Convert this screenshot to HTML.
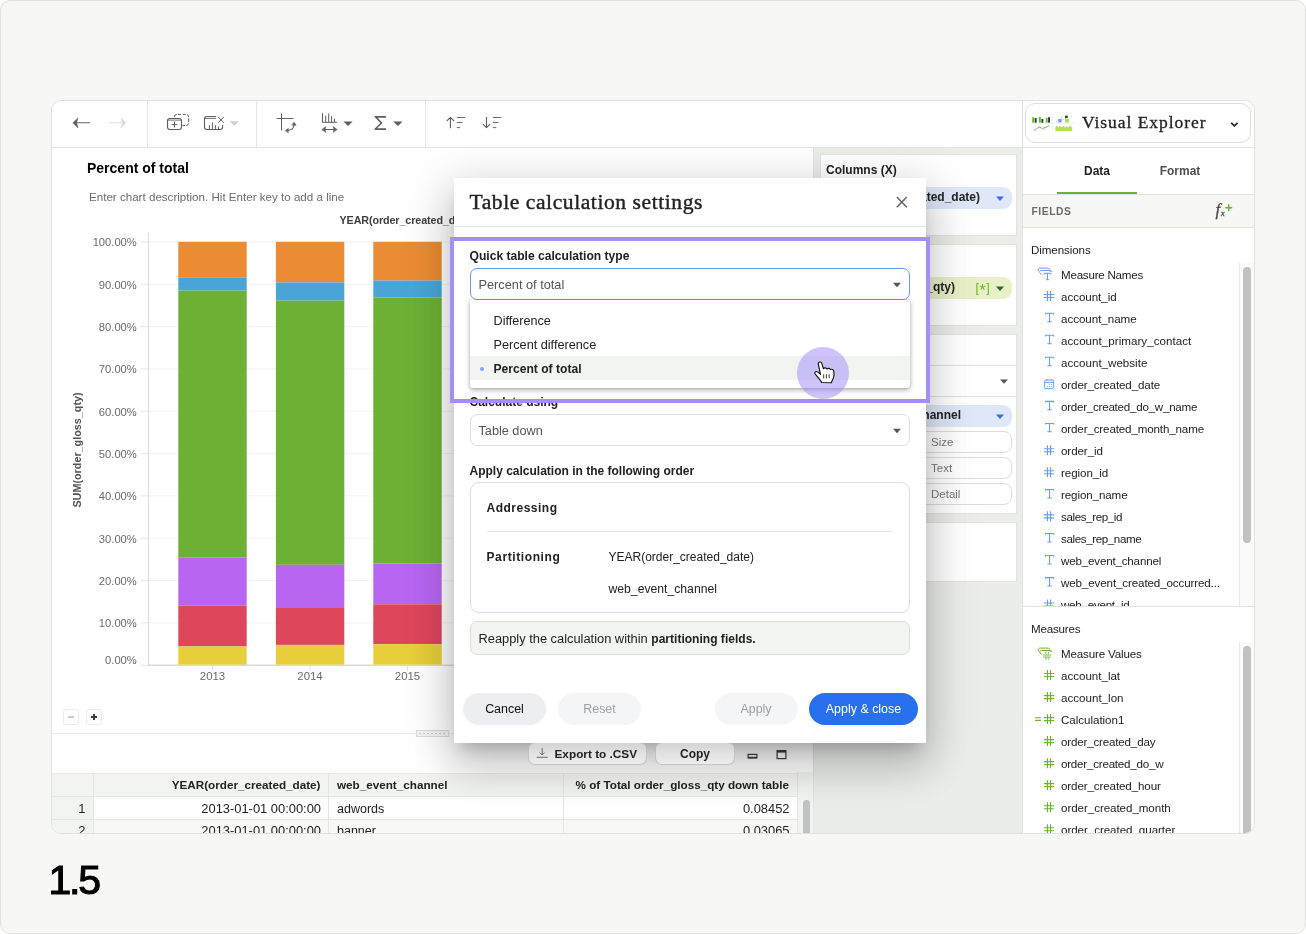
<!DOCTYPE html>
<html lang="en">
<head>
<meta charset="utf-8">
<title>Table calculation settings</title>
<style>
*{box-sizing:border-box;margin:0;padding:0}
html,body{width:1306px;height:934px;overflow:hidden;background:#fff}
body{position:relative;font-family:"Liberation Sans",sans-serif;color:#222;font-size:12px}
.a{position:absolute;white-space:nowrap}
body{will-change:transform}
.frame{left:0;top:0;width:1306px;height:934px;border:1px solid #dfe2de;border-radius:10px;background:#f7f7f5}
.app{left:51px;top:100px;width:1204px;height:734px;border:1px solid #dfe2de;border-radius:10px;background:#fff;overflow:hidden}
.pg{left:-52px;top:-101px;width:1306px;height:934px}
.serif{font-family:"Liberation Serif",serif}
.b{font-weight:700}
.t{line-height:16px;height:16px}
/*SECTION-CSS*/
</style>
</head>
<body>
<div class="a frame"></div>
<div class="a app"><div class="a pg">
<!--TOOLBAR-->
<div class="a" style="left:52px;top:147px;width:1202px;height:1px;background:#e3e5e1"></div>
<div class="a" style="left:147px;top:101px;width:1px;height:46px;background:#e6e8e4"></div>
<div class="a" style="left:256px;top:101px;width:1px;height:46px;background:#e6e8e4"></div>
<div class="a" style="left:425px;top:101px;width:1px;height:46px;background:#e6e8e4"></div>
<svg class="a" style="left:52px;top:101px" width="480" height="46" viewBox="52 101 480 46" fill="none" stroke="#5e5e5c" stroke-width="1" stroke-linecap="round" stroke-linejoin="round">
  <path d="M76 122.7H89.6" stroke-width="1.1" stroke="#666664"/>
  <path d="M73 122.7L77.9 117.900L76.500 122.7L77.9 127.5Z" fill="#5e5e5c" stroke-width=".6"/>
  <path d="M109.2 122.7H123" stroke="#dededc" stroke-width="1.1"/>
  <path d="M125.800 122.7L121.100 117.900L122.500 122.7L121.100 127.5Z" fill="#dcdcda" stroke="#dcdcda" stroke-width=".6"/>
  <!-- duplicate -->
  <rect x="167.5" y="118.5" width="14" height="11" rx="2.4" stroke-width="1.1"/>
  <path d="M168 120.1H181" stroke-width=".9"/>
  <path d="M174.500 122.100V127.100M172 124.600H177" stroke-width="1"/>
  <path d="M174.300 117.200V116.900a2.500 2.500 0 0 1 2.500-2.500h0.300M177.900 114.400H181M182.800 114.400H185.800M187 114.600a2.500 2.500 0 0 1 1.700 2.300v.3M188.700 118.300V122.100M188.700 123.300a2.500 2.500 0 0 1-2.300 2.100M185 125.400H182.300" stroke-width="1" stroke-linecap="butt"/>
  <!-- chart x -->
  <path d="M215.600 116.500H207a2.500 2.500 0 0 0-2.500 2.500v8a2.500 2.500 0 0 0 2.500 2.500h13.100a2.500 2.500 0 0 0 2.500-2.500V125.200" stroke-width="1.1"/>
  <path d="M205 118.400H215.600" stroke-width=".9"/>
  <path d="M209.400 129V125.200M212.400 129V122.300M215.400 129V125.200M218.400 129V126.400" stroke-width="1" stroke-linecap="butt"/>
  <path d="M218.400 117.300L223.600 122.500M223.600 117.300L218.400 122.500" stroke-width="1"/>
  <path d="M229.600 121.300h9.200l-4.600 4.500z" fill="#cdcfcb" stroke="none"/>
  <!-- swap axes -->
  <path d="M281.500 114V130M277 118.400H293" stroke-width="1.050"/>
  <path d="M287.500 130.500C291.500 130.200 293.900 128.600 294.100 124.800" stroke-width="1.050"/>
  <path d="M285.400 130.500L288.300 128.400V132.500ZM294.100 122.300L296.200 125.200H292Z" fill="#5e5e5c" stroke-width=".5"/>
  <!-- bars + arrow -->
  <path d="M322.500 113.200V122.300H337M325.700 122.300V115.600M328.700 122.300V113.500M331.600 122.300V116.100M334.500 122.300V118.800" stroke-width="1" stroke-linecap="butt"/>
  <path d="M324.500 129.400H334.500" stroke-width="1.050"/>
  <path d="M321.900 129.400L325.900 126.600L325.100 129.400L325.900 132.300ZM337.100 129.400L333.100 126.600L333.900 129.400L333.100 132.300Z" fill="#5e5e5c" stroke-width=".5"/>
  <path d="M343.400 121.400h9.300l-4.650 4.600z" fill="#5e5e5c" stroke="none"/>
  <!-- sigma -->
  <path d="M374.600 116h11.300v1.700h-8.300l5 5.300l-5.500 5.300h8.900v1.700h-11.500v-1.200l5.900-5.800l-5.800-5.900z" fill="#5e5e5c" stroke="none"/>
  <path d="M393.300 121.400h9.300l-4.650 4.600z" fill="#5e5e5c" stroke="none"/>
  <!-- sort asc -->
  <path d="M450.400 127.800V117.600M447.100 120.600L450.400 117.300L453.700 120.600" stroke-width="1.1"/>
  <path d="M457.200 117.500H464.800M457.200 122.500H462M457.200 127.600H459.800" stroke-width="1" stroke="#6a6a68"/>
  <!-- sort desc -->
  <path d="M486.500 117.200V127.500M483.200 124.400L486.500 127.700L489.800 124.400" stroke-width="1.1"/>
  <path d="M493.300 117.500H500.900M493.300 122.500H498.100M493.300 127.600H495.900" stroke-width="1" stroke="#6a6a68"/>
</svg>
<!--/TOOLBAR-->
<!--CHART-->
<div class="a b" style="left:87px;top:159px;font-size:14px;line-height:18px;color:#000">Percent of total</div>
<div class="a" style="left:89px;top:190px;font-size:11.6px;line-height:14px;color:#6b6b69">Enter chart description. Hit Enter key to add a line</div>
<div class="a b" style="left:339.5px;top:213px;font-size:10.75px;line-height:14px;color:#3f3f3d;letter-spacing:-.1px">YEAR(order_created_date)</div>
<div class="a b" style="left:-23px;top:443px;width:200px;text-align:center;font-size:10.8px;line-height:14px;color:#555553;transform:rotate(-90deg)">SUM(order_gloss_qty)</div>
<svg class="a" style="left:52px;top:225px" width="761" height="470" viewBox="52 225 761 470"><rect x="140.5" y="664.70" width="8" height="1" fill="#e6e6e4"/><rect x="148" y="622.38" width="665" height="1" fill="#f2f2f0"/><rect x="140.5" y="622.38" width="8" height="1" fill="#e6e6e4"/><rect x="148" y="580.06" width="665" height="1" fill="#f2f2f0"/><rect x="140.5" y="580.06" width="8" height="1" fill="#e6e6e4"/><rect x="148" y="537.74" width="665" height="1" fill="#f2f2f0"/><rect x="140.5" y="537.74" width="8" height="1" fill="#e6e6e4"/><rect x="148" y="495.42" width="665" height="1" fill="#f2f2f0"/><rect x="140.5" y="495.42" width="8" height="1" fill="#e6e6e4"/><rect x="148" y="453.10" width="665" height="1" fill="#f2f2f0"/><rect x="140.5" y="453.10" width="8" height="1" fill="#e6e6e4"/><rect x="148" y="410.78" width="665" height="1" fill="#f2f2f0"/><rect x="140.5" y="410.78" width="8" height="1" fill="#e6e6e4"/><rect x="148" y="368.46" width="665" height="1" fill="#f2f2f0"/><rect x="140.5" y="368.46" width="8" height="1" fill="#e6e6e4"/><rect x="148" y="326.14" width="665" height="1" fill="#f2f2f0"/><rect x="140.5" y="326.14" width="8" height="1" fill="#e6e6e4"/><rect x="148" y="283.82" width="665" height="1" fill="#f2f2f0"/><rect x="140.5" y="283.82" width="8" height="1" fill="#e6e6e4"/><rect x="148" y="241.50" width="665" height="1" fill="#f2f2f0"/><rect x="140.5" y="241.50" width="8" height="1" fill="#e6e6e4"/><rect x="148" y="233" width="1" height="433" fill="#dcdcda"/><rect x="148" y="664.60" width="665" height="1.2" fill="#d0d0ce"/><rect x="178.3" y="241.8" width="68.4" height="35.6" fill="#eb8c34"/><rect x="178.3" y="277.4" width="68.4" height="13.2" fill="#49a5d8"/><rect x="178.3" y="290.6" width="68.4" height="266.7" fill="#6db134"/><rect x="178.3" y="557.3" width="68.4" height="48.2" fill="#b866f2"/><rect x="178.3" y="605.5" width="68.4" height="40.9" fill="#de465c"/><rect x="178.3" y="646.4" width="68.4" height="18.2" fill="#e8ce3a"/><rect x="275.9" y="241.8" width="68.4" height="40.6" fill="#eb8c34"/><rect x="275.9" y="282.4" width="68.4" height="18.2" fill="#49a5d8"/><rect x="275.9" y="300.6" width="68.4" height="264.2" fill="#6db134"/><rect x="275.9" y="564.8" width="68.4" height="42.4" fill="#b866f2"/><rect x="275.9" y="607.2" width="68.4" height="37.7" fill="#de465c"/><rect x="275.9" y="644.9" width="68.4" height="19.7" fill="#e8ce3a"/><rect x="373.3" y="241.8" width="68.4" height="38.7" fill="#eb8c34"/><rect x="373.3" y="280.5" width="68.4" height="16.9" fill="#49a5d8"/><rect x="373.3" y="297.4" width="68.4" height="266.2" fill="#6db134"/><rect x="373.3" y="563.6" width="68.4" height="40.7" fill="#b866f2"/><rect x="373.3" y="604.3" width="68.4" height="39.9" fill="#de465c"/><rect x="373.3" y="644.2" width="68.4" height="20.4" fill="#e8ce3a"/><rect x="470.8" y="241.8" width="68.4" height="39.2" fill="#eb8c34"/><rect x="470.8" y="281" width="68.4" height="17.0" fill="#49a5d8"/><rect x="470.8" y="298" width="68.4" height="265.0" fill="#6db134"/><rect x="470.8" y="563" width="68.4" height="41.0" fill="#b866f2"/><rect x="470.8" y="604" width="68.4" height="40.0" fill="#de465c"/><rect x="470.8" y="644" width="68.4" height="20.6" fill="#e8ce3a"/><rect x="212.0" y="666" width="1" height="5" fill="#e6e6e4"/><rect x="309.5" y="666" width="1" height="5" fill="#e6e6e4"/><rect x="407.0" y="666" width="1" height="5" fill="#e6e6e4"/></svg>
<div class="a" style="left:60px;width:76.8px;text-align:right;top:652.8px;font-size:11.2px;line-height:14px;color:#6b6b69">0.00%</div>
<div class="a" style="left:60px;width:76.8px;text-align:right;top:616.2px;font-size:11.2px;line-height:14px;color:#6b6b69">10.00%</div>
<div class="a" style="left:60px;width:76.8px;text-align:right;top:573.9px;font-size:11.2px;line-height:14px;color:#6b6b69">20.00%</div>
<div class="a" style="left:60px;width:76.8px;text-align:right;top:531.5px;font-size:11.2px;line-height:14px;color:#6b6b69">30.00%</div>
<div class="a" style="left:60px;width:76.8px;text-align:right;top:489.2px;font-size:11.2px;line-height:14px;color:#6b6b69">40.00%</div>
<div class="a" style="left:60px;width:76.8px;text-align:right;top:446.9px;font-size:11.2px;line-height:14px;color:#6b6b69">50.00%</div>
<div class="a" style="left:60px;width:76.8px;text-align:right;top:404.6px;font-size:11.2px;line-height:14px;color:#6b6b69">60.00%</div>
<div class="a" style="left:60px;width:76.8px;text-align:right;top:362.3px;font-size:11.2px;line-height:14px;color:#6b6b69">70.00%</div>
<div class="a" style="left:60px;width:76.8px;text-align:right;top:319.9px;font-size:11.2px;line-height:14px;color:#6b6b69">80.00%</div>
<div class="a" style="left:60px;width:76.8px;text-align:right;top:277.6px;font-size:11.2px;line-height:14px;color:#6b6b69">90.00%</div>
<div class="a" style="left:60px;width:76.8px;text-align:right;top:235.3px;font-size:11.2px;line-height:14px;color:#6b6b69">100.00%</div>
<div class="a" style="left:182.5px;width:60px;text-align:center;top:669px;font-size:11.4px;line-height:14px;color:#6b6b69">2013</div>
<div class="a" style="left:280px;width:60px;text-align:center;top:669px;font-size:11.4px;line-height:14px;color:#6b6b69">2014</div>
<div class="a" style="left:377.5px;width:60px;text-align:center;top:669px;font-size:11.4px;line-height:14px;color:#6b6b69">2015</div>
<div class="a" style="left:63px;top:709px;width:16px;height:16px;border:1px solid #e9ebe6;border-radius:3px;background:#fff"></div>
<div class="a" style="left:86px;top:709px;width:16px;height:16px;border:1px solid #e9ebe6;border-radius:3px;background:#fff"></div>
<svg class="a" style="left:63px;top:709px" width="40" height="16" viewBox="63 709 40 16" shape-rendering="crispEdges"><rect x="68" y="716" width="6" height="2" fill="#cbcbc9"/><rect x="91" y="716" width="6" height="2" fill="#3a3a38"/><rect x="93" y="714" width="2" height="6" fill="#3a3a38"/></svg>
<div class="a" style="left:52px;top:733px;width:761px;height:1px;background:#ededeb"></div>
<div class="a" style="left:416px;top:730px;width:33px;height:7px;border:1px solid #d9dcd7;background:#f4f5f3"><div class="a" style="left:2px;top:2px;width:27px;height:1px;background:repeating-linear-gradient(90deg,#c9ccc7 0 2px,transparent 2px 4px)"></div></div>
<!--/CHART-->
<!--TABLE-->
<svg class="a" style="left:746px;top:748px" width="44" height="14" viewBox="746 748 44 14" fill="none" stroke="#3c3c3a" stroke-width="1.2"><rect x="748.1" y="754.4" width="8.8" height="3.4"/><path d="M748 757.6H757" stroke-width="1.6"/><rect x="777.1" y="750.6" width="8.8" height="8"/><path d="M777 751.6H786" stroke-width="2"/></svg>
<div class="a" style="left:52px;top:772px;width:761px;height:62px;background:#fff"></div>
<div class="a" style="left:94px;top:820px;width:703px;height:14px;background:#f8f9f7"></div><div class="a" style="left:52px;top:773px;width:761px;height:24px;background:#f2f4f1;border-top:1px solid #eaece8;border-bottom:1px solid #e6e8e4"></div>
<div class="a" style="left:52px;top:797px;width:42px;height:37px;background:#f2f4f1"></div>
<div class="a" style="left:797px;top:772px;width:16px;height:62px;background:#f2f4f1;border-left:1px solid #e4e6e2"></div>
<div class="a" style="left:93px;top:773px;width:1px;height:61px;background:#e4e6e2"></div>
<div class="a" style="left:328px;top:773px;width:1px;height:61px;background:#e4e6e2"></div>
<div class="a" style="left:563px;top:773px;width:1px;height:61px;background:#e4e6e2"></div>
<div class="a" style="left:52px;top:819px;width:745px;height:1px;background:#e4e6e2"></div>
<div class="a" style="left:803px;top:800px;width:7px;height:40px;border-radius:4px;background:#c1c1c1"></div>
<div class="a b" style="left:94px;width:226.5px;text-align:right;font-size:11.7px;line-height:16px;color:#222;top:777px">YEAR(order_created_date)</div>
<div class="a b" style="left:337px;font-size:11.7px;line-height:16px;color:#222;top:777px">web_event_channel</div>
<div class="a b" style="left:564px;width:225px;text-align:right;font-size:11.7px;line-height:16px;color:#222;top:777px">% of Total order_gloss_qty down table</div>
<div class="a" style="left:52px;width:33.5px;text-align:right;top:800.5px;font-size:12.9px;line-height:16px;color:#222">1</div>
<div class="a" style="left:94px;width:227px;text-align:right;top:800.5px;font-size:12.9px;line-height:16px;color:#222">2013-01-01 00:00:00</div>
<div class="a" style="left:337px;top:800.5px;font-size:12.5px;line-height:16px;color:#222">adwords</div>
<div class="a" style="left:564px;width:225.5px;text-align:right;top:800.5px;font-size:12.9px;line-height:16px;color:#222">0.08452</div>
<div class="a" style="left:52px;width:33.5px;text-align:right;top:823.0px;font-size:12.9px;line-height:16px;color:#222">2</div>
<div class="a" style="left:94px;width:227px;text-align:right;top:823.0px;font-size:12.9px;line-height:16px;color:#222">2013-01-01 00:00:00</div>
<div class="a" style="left:337px;top:823.0px;font-size:12.5px;line-height:16px;color:#222">banner</div>
<div class="a" style="left:564px;width:225.5px;text-align:right;top:823.0px;font-size:12.9px;line-height:16px;color:#222">0.03065</div>
<!--/TABLE-->
<!--SHELF-->
<div class="a" style="left:813px;top:148px;width:210px;height:686px;background:#ebede9;border-left:1px solid #e1e3df"></div>
<div class="a" style="left:820px;top:154px;width:197px;height:82px;background:#fff;border:1px solid #e1e3df"></div>
<div class="a" style="left:820px;top:244px;width:197px;height:82px;background:#fff;border:1px solid #e1e3df"></div>
<div class="a" style="left:820px;top:334px;width:197px;height:180px;background:#fff;border:1px solid #e1e3df"></div>
<div class="a" style="left:820px;top:522px;width:197px;height:60px;background:#fff;border:1px solid #e1e3df"></div>
<div class="a b" style="left:826px;top:161.5px;font-size:12px;line-height:16px;color:#222">Columns (X)</div>
<div class="a b" style="left:826px;top:251.5px;font-size:12px;line-height:16px;color:#222">Rows (Y)</div>
<div class="a b" style="left:826px;top:341.5px;font-size:12px;line-height:16px;color:#222">Marks</div>
<div class="a" style="left:825px;top:187px;width:187px;height:22px;border-radius:9px;font-size:12px;line-height:21px;font-weight:700;color:#222;text-align:right;background:#dfe8f8;padding-right:32px">YEAR(order_created_date)</div>
<div class="a" style="left:825px;top:277px;width:187px;height:22px;border-radius:9px;font-size:12px;line-height:21px;font-weight:700;color:#222;text-align:right;background:#e7f0c6;padding-right:57px">SUM(order_gloss_qty)</div>
<div class="a" style="left:975.5px;top:279.5px;font-size:12.5px;line-height:16px;color:#6db32c">[<span style="font-size:17px;line-height:0;position:relative;top:4.2px;margin:0 .3px">*</span>]</div>
<div class="a" style="left:825px;top:405px;width:187px;height:22px;border-radius:9px;font-size:12px;line-height:21px;font-weight:700;color:#222;text-align:right;background:#dfe8f8;padding-right:51px">web_event_channel</div>
<svg class="a" style="left:990px;top:190px" width="20" height="240" viewBox="990 190 20 240"><path d="M996 196.6h8l-4 4.4z" fill="#3a6fd9"/><path d="M996 286.6h8l-4 4.4z" fill="#2a6a1c"/><path d="M1000 379.4h8l-4 4.4z" fill="#555"/><path d="M996 414.6h8l-4 4.4z" fill="#3a6fd9"/></svg>
<div class="a" style="left:821px;top:365px;width:195px;height:1px;background:#dfe1dd"></div>
<div class="a" style="left:821px;top:396px;width:195px;height:1px;background:#dfe1dd"></div>
<div class="a" style="left:830px;top:373.5px;font-size:12px;line-height:16px;color:#555">Bar</div>
<div class="a" style="top:431px;left:825px;width:187px;height:22px;border:1px solid #dcdeda;border-radius:8px;background:#fff;font-size:11.5px;line-height:20px;color:#777;padding-left:105px">Size</div>
<div class="a" style="top:457px;left:825px;width:187px;height:22px;border:1px solid #dcdeda;border-radius:8px;background:#fff;font-size:11.5px;line-height:20px;color:#777;padding-left:105px">Text</div>
<div class="a" style="top:483px;left:825px;width:187px;height:22px;border:1px solid #dcdeda;border-radius:8px;background:#fff;font-size:11.5px;line-height:20px;color:#777;padding-left:105px">Detail</div>
<!--/SHELF-->
<!--PANEL-->
<div class="a" style="left:1022px;top:101px;width:232px;height:733px;background:#fff;border-left:1px solid #e1e3df"></div>
<div class="a" style="left:1022px;top:147px;width:232px;height:1px;background:#e3e5e1"></div>
<div class="a" style="left:1025px;top:103px;width:226px;height:40px;border:1px solid #dcdeda;border-radius:10px;background:#fff"></div>
<svg class="a" style="left:1029px;top:114px" width="48" height="19" viewBox="1029 114 48 19">
<path d="M1030 123.6H1075M1052.6 115.2V131.4" stroke="#ecedea" stroke-width="0.8" fill="none"/>
<g fill="#6db32c"><rect x="1032.2" y="117.3" width="1.9" height="5.4"/><rect x="1038.9" y="116.9" width="1.9" height="5.8"/><rect x="1045.8" y="117.7" width="1.8" height="5"/></g>
<g fill="#0f4a30"><rect x="1034.7" y="118" width="1.9" height="4.7"/><rect x="1041.4" y="119" width="1.9" height="3.7"/><rect x="1048.1" y="117.2" width="1.9" height="5.5"/></g>
<path d="M1033.6 130.6L1039.3 127L1042.6 128.6L1049.6 125.6" stroke="#6db32c" stroke-width="0.9" fill="none"/>
<path d="M1034.6 130.8L1039.4 125.4L1044 130.4L1049.8 125.2" stroke="#c5d6fb" stroke-width="0.6" fill="none"/>
<rect x="1058.2" y="119" width="3.4" height="3.4" fill="#6a9bf4"/><rect x="1065" y="115.6" width="2.8" height="2.6" fill="#17602c"/><rect x="1065" y="119" width="4" height="3.6" fill="#b5e05a"/>
<g fill="#a9c3fa"><rect x="1056" y="121" width="1" height="1"/><rect x="1061" y="117" width="1" height="1"/><rect x="1062.8" y="118.8" width="1" height="1"/><rect x="1070.8" y="115.8" width="1" height="1"/></g>
<path d="M1055.3 131V127.5L1057 125.6L1058.4 127.4L1060 125.8L1061.6 127.6L1063.4 125.8L1065 127.8L1066.8 126L1068.2 127.6L1070 125.6L1072.2 127.4V131Z" fill="#b5e05a"/>
</svg>
<div class="a serif" style="left:1082px;top:110px;font-size:17.5px;line-height:24px;letter-spacing:.95px;color:#222;-webkit-text-stroke:.3px #222">Visual Explorer</div>
<svg class="a" style="left:1229px;top:120px" width="11" height="9" viewBox="0 0 11 9"><path d="M2.2 2.8L5.4 5.8L8.6 2.8" stroke="#222" stroke-width="1.7" fill="none"/></svg>
<div class="a b" style="left:1057px;top:162.5px;width:80px;text-align:center;font-size:12px;line-height:16px;color:#222">Data</div>
<div class="a b" style="left:1140px;top:162.5px;width:80px;text-align:center;font-size:12px;line-height:16px;color:#4f4f4d">Format</div>
<div class="a" style="left:1057px;top:191.5px;width:80px;height:2.5px;background:#6db32c"></div>
<div class="a" style="left:1023px;top:194px;width:231px;height:34px;background:#f7f7f5;border-top:1px solid #e1e3df;border-bottom:1px solid #e1e3df"></div>
<div class="a b" style="left:1031.5px;top:204px;font-size:10.3px;line-height:16px;letter-spacing:.55px;color:#6b6b69">FIELDS</div>
<div class="a serif" style="left:1215.5px;top:200px;font-size:17px;line-height:20px;font-style:italic;color:#4a4a48;-webkit-text-stroke:.3px #4a4a48">f</div>
<div class="a serif" style="left:1221px;top:208.5px;font-size:8px;line-height:10px;font-style:italic;color:#4a4a48;-webkit-text-stroke:.3px #4a4a48">x</div>
<svg class="a" style="left:1224px;top:203px" width="10" height="10" viewBox="0 0 10 10"><path d="M4.7 1.2V8.2M1.2 4.7H8.2" stroke="#6db32c" stroke-width="1.5" fill="none"/></svg>
<div class="a" style="left:1031px;top:242px;font-size:11.6px;line-height:16px;color:#222;letter-spacing:-.09px">Dimensions</div>
<div class="a" style="left:1031px;top:621px;font-size:11.6px;line-height:16px;color:#222;letter-spacing:-.2px">Measures</div>
<div class="a" style="left:1023px;top:606px;width:231px;height:1px;background:#e1e3df"></div>
<div class="a" style="left:0;top:262px;width:1239px;height:344px;overflow:hidden"><svg class="a" style="left:1030px;top:0px" width="30" height="344" viewBox="1030 262 30 344"><path d="M1038.3 271.2C1038 269.1 1038.7 268.1 1040.1 268.1H1048.6L1051.7 271.7" stroke="#6a9bf4" stroke-width="1" fill="none"/><path d="M1041.6 274.7L1039.7 272.4C1039.4 271.2 1040.1 270.5 1041.6 270.5H1048.9L1051.5 271.7" stroke="#6a9bf4" stroke-width="1" fill="none"/><path d="M1044.2 274.7V273.3H1050.8V274.7M1047.5 273.3V279.7M1046 279.7H1048.9" stroke="#6a9bf4" stroke-width="1" fill="none"/><path d="M1047.45 291.03V301.03M1050.55 291.03V301.03M1043.9 294.53H1054.1M1043.9 297.53H1054.1" stroke="#6a9bf4" stroke-width="1.15" fill="none"/><path d="M1045.5 314.46V313.26H1053.6V314.46M1049.55 313.26V321.66M1047.4 321.66H1051.7" stroke="#6a9bf4" stroke-width="1.05" fill="none"/><path d="M1045.5 336.49V335.29H1053.6V336.49M1049.55 335.29V343.69M1047.4 343.69H1051.7" stroke="#6a9bf4" stroke-width="1.05" fill="none"/><path d="M1045.5 358.52V357.32H1053.6V358.52M1049.55 357.32V365.72M1047.4 365.72H1051.7" stroke="#6a9bf4" stroke-width="1.05" fill="none"/><rect x="1044.6" y="380.05" width="9" height="8.6" rx="1.3" stroke="#6a9bf4" stroke-width="1" fill="none"/><path d="M1044.6 382.35H1053.6M1046.9 379.05V380.25M1051.3 379.05V380.25" stroke="#6a9bf4" stroke-width="1" fill="none"/><path d="M1049 384.45h.9M1051 384.45h.9M1047 386.45h.9M1049 386.45h.9M1051 386.45h.9" stroke="#6a9bf4" stroke-width="0.9" fill="none"/><path d="M1045.5 402.58V401.38H1053.6V402.58M1049.55 401.38V409.78M1047.4 409.78H1051.7" stroke="#6a9bf4" stroke-width="1.05" fill="none"/><path d="M1045.5 424.61V423.41H1053.6V424.61M1049.55 423.41V431.81M1047.4 431.81H1051.7" stroke="#6a9bf4" stroke-width="1.05" fill="none"/><path d="M1047.45 445.24V455.24M1050.55 445.24V455.24M1043.9 448.74H1054.1M1043.9 451.74H1054.1" stroke="#6a9bf4" stroke-width="1.15" fill="none"/><path d="M1047.45 467.27V477.27M1050.55 467.27V477.27M1043.9 470.77H1054.1M1043.9 473.77H1054.1" stroke="#6a9bf4" stroke-width="1.15" fill="none"/><path d="M1045.5 490.7V489.5H1053.6V490.7M1049.55 489.5V497.9M1047.4 497.9H1051.7" stroke="#6a9bf4" stroke-width="1.05" fill="none"/><path d="M1047.45 511.33V521.33M1050.55 511.33V521.33M1043.9 514.83H1054.1M1043.9 517.83H1054.1" stroke="#6a9bf4" stroke-width="1.15" fill="none"/><path d="M1045.5 534.76V533.56H1053.6V534.76M1049.55 533.56V541.96M1047.4 541.96H1051.7" stroke="#6a9bf4" stroke-width="1.05" fill="none"/><path d="M1045.5 556.79V555.59H1053.6V556.79M1049.55 555.59V563.99M1047.4 563.99H1051.7" stroke="#6a9bf4" stroke-width="1.05" fill="none"/><path d="M1045.5 578.82V577.62H1053.6V578.82M1049.55 577.62V586.02M1047.4 586.02H1051.7" stroke="#6a9bf4" stroke-width="1.05" fill="none"/><path d="M1047.45 599.45V609.45M1050.55 599.45V609.45M1043.9 602.95H1054.1M1043.9 605.95H1054.1" stroke="#6a9bf4" stroke-width="1.15" fill="none"/></svg><div class="a" style="left:1061px;top:4.5px;font-size:11.6px;line-height:16px;color:#222;letter-spacing:-0.234px">Measure Names</div><div class="a" style="left:1061px;top:26.5px;font-size:11.6px;line-height:16px;color:#222;letter-spacing:-0.047px">account_id</div><div class="a" style="left:1061px;top:48.6px;font-size:11.6px;line-height:16px;color:#222;letter-spacing:-0.039px">account_name</div><div class="a" style="left:1061px;top:70.6px;font-size:11.6px;line-height:16px;color:#222;letter-spacing:0.031px">account_primary_contact</div><div class="a" style="left:1061px;top:92.6px;font-size:11.6px;line-height:16px;color:#222;letter-spacing:0.000px">account_website</div><div class="a" style="left:1061px;top:114.6px;font-size:11.6px;line-height:16px;color:#222;letter-spacing:-0.117px">order_created_date</div><div class="a" style="left:1061px;top:136.7px;font-size:11.6px;line-height:16px;color:#222;letter-spacing:-0.245px">order_created_do_w_name</div><div class="a" style="left:1061px;top:158.7px;font-size:11.6px;line-height:16px;color:#222;letter-spacing:-0.137px">order_created_month_name</div><div class="a" style="left:1061px;top:180.7px;font-size:11.6px;line-height:16px;color:#222;letter-spacing:-0.088px">order_id</div><div class="a" style="left:1061px;top:202.8px;font-size:11.6px;line-height:16px;color:#222;letter-spacing:-0.078px">region_id</div><div class="a" style="left:1061px;top:224.8px;font-size:11.6px;line-height:16px;color:#222;letter-spacing:-0.107px">region_name</div><div class="a" style="left:1061px;top:246.8px;font-size:11.6px;line-height:16px;color:#222;letter-spacing:-0.391px">sales_rep_id</div><div class="a" style="left:1061px;top:268.9px;font-size:11.6px;line-height:16px;color:#222;letter-spacing:-0.385px">sales_rep_name</div><div class="a" style="left:1061px;top:290.9px;font-size:11.6px;line-height:16px;color:#222;letter-spacing:-0.179px">web_event_channel</div><div class="a" style="left:1061px;top:312.9px;font-size:11.6px;line-height:16px;color:#222;letter-spacing:-0.121px">web_event_created_occurred...</div><div class="a" style="left:1061px;top:335.0px;font-size:11.6px;line-height:16px;color:#222;letter-spacing:-0.254px">web_event_id</div></div>
<div class="a" style="left:0;top:640px;width:1239px;height:194px;overflow:hidden"><svg class="a" style="left:1030px;top:0px" width="30" height="194" viewBox="1030 640 30 194"><path d="M1038.3 651.2C1038 649.1 1038.7 648.1 1040.1 648.1H1048.6L1051.7 651.7" stroke="#6db32c" stroke-width="1" fill="none"/><path d="M1041.6 654.7L1039.7 652.4C1039.4 651.2 1040.1 650.5 1041.6 650.5H1048.9L1051.5 651.7" stroke="#6db32c" stroke-width="1" fill="none"/><path d="M1045.8 652.1V660.1M1048.4 652.1V660.1M1043 655.1H1051M1043 657.3H1051" stroke="#6db32c" stroke-width="1.5" fill="none" opacity=".55"/><path d="M1047.45 670.03V680.03M1050.55 670.03V680.03M1043.9 673.53H1054.1M1043.9 676.53H1054.1" stroke="#6db32c" stroke-width="1.15" fill="none"/><path d="M1047.45 692.06V702.06M1050.55 692.06V702.06M1043.9 695.56H1054.1M1043.9 698.56H1054.1" stroke="#6db32c" stroke-width="1.15" fill="none"/><path d="M1047.45 714.09V724.09M1050.55 714.09V724.09M1043.9 717.59H1054.1M1043.9 720.59H1054.1" stroke="#6db32c" stroke-width="1.15" fill="none"/><path d="M1035 717.79H1041.1M1035 720.39H1041.1" stroke="#6db32c" stroke-width="1.1" fill="none"/><path d="M1047.45 736.12V746.12M1050.55 736.12V746.12M1043.9 739.62H1054.1M1043.9 742.62H1054.1" stroke="#6db32c" stroke-width="1.15" fill="none"/><path d="M1047.45 758.15V768.15M1050.55 758.15V768.15M1043.9 761.65H1054.1M1043.9 764.65H1054.1" stroke="#6db32c" stroke-width="1.15" fill="none"/><path d="M1047.45 780.18V790.18M1050.55 780.18V790.18M1043.9 783.68H1054.1M1043.9 786.68H1054.1" stroke="#6db32c" stroke-width="1.15" fill="none"/><path d="M1047.45 802.21V812.21M1050.55 802.21V812.21M1043.9 805.71H1054.1M1043.9 808.71H1054.1" stroke="#6db32c" stroke-width="1.15" fill="none"/><path d="M1047.45 824.24V834.24M1050.55 824.24V834.24M1043.9 827.74H1054.1M1043.9 830.74H1054.1" stroke="#6db32c" stroke-width="1.15" fill="none"/></svg><div class="a" style="left:1061px;top:5.5px;font-size:11.6px;line-height:16px;color:#222;letter-spacing:-0.167px">Measure Values</div><div class="a" style="left:1061px;top:27.5px;font-size:11.6px;line-height:16px;color:#222;letter-spacing:-0.021px">account_lat</div><div class="a" style="left:1061px;top:49.6px;font-size:11.6px;line-height:16px;color:#222;letter-spacing:0.000px">account_lon</div><div class="a" style="left:1061px;top:71.6px;font-size:11.6px;line-height:16px;color:#222;letter-spacing:-0.039px">Calculation1</div><div class="a" style="left:1061px;top:93.6px;font-size:11.6px;line-height:16px;color:#222;letter-spacing:-0.179px">order_created_day</div><div class="a" style="left:1061px;top:115.6px;font-size:11.6px;line-height:16px;color:#222;letter-spacing:-0.221px">order_created_do_w</div><div class="a" style="left:1061px;top:137.7px;font-size:11.6px;line-height:16px;color:#222;letter-spacing:-0.117px">order_created_hour</div><div class="a" style="left:1061px;top:159.7px;font-size:11.6px;line-height:16px;color:#222;letter-spacing:-0.062px">order_created_month</div><div class="a" style="left:1061px;top:181.7px;font-size:11.6px;line-height:16px;color:#222;letter-spacing:-0.056px">order_created_quarter</div></div>
<div class="a" style="left:1239px;top:263px;width:15px;height:343px;background:#fafafa;border-left:1px solid #e8e8e8"></div>
<div class="a" style="left:1243px;top:267px;width:8px;height:276px;border-radius:4px;background:#c1c1c1"></div>
<div class="a" style="left:1239px;top:642px;width:15px;height:192px;background:#fafafa;border-left:1px solid #e8e8e8"></div>
<div class="a" style="left:1243px;top:646px;width:8px;height:200px;border-radius:4px;background:#c1c1c1"></div>
<!--/PANEL-->
</div></div>
<!--MODAL-->
<div class="a" style="left:454px;top:178px;width:472px;height:565px;background:#fff;box-shadow:0 11px 15px -7px rgba(0,0,0,.2),0 24px 38px 3px rgba(0,0,0,.14),0 9px 46px 8px rgba(0,0,0,.12)"></div>
<div class="a serif" style="left:469.5px;top:186.5px;font-size:21.6px;line-height:30px;color:#222;letter-spacing:.55px;-webkit-text-stroke:.4px #222">Table calculation settings</div>
<svg class="a" style="left:895px;top:195px" width="14" height="14" viewBox="0 0 14 14"><path d="M1.800 2L11.800 12.200M11.800 2L1.800 12.200" stroke="#676765" stroke-width="1.55" fill="none"/></svg>
<div class="a" style="left:454px;top:226px;width:472px;height:1px;background:#e6e8e4"></div>
<div class="a" style="left:469.5px;top:247.5px;font-size:12.1px;line-height:16px;color:#222;font-weight:700">Quick table calculation type</div>
<div class="a" style="left:470px;top:268px;width:440px;height:32px;border:1px solid #6a9bf4;border-radius:7px;background:#fff"></div>
<div class="a" style="left:478.5px;top:276.5px;font-size:12.75px;line-height:16px;color:#555553">Percent of total</div>
<svg class="a" style="left:892px;top:282px" width="10" height="6" viewBox="0 0 10 6"><path d="M1 .8h8l-4 4.4z" fill="#555"/></svg>
<div class="a" style="left:469.5px;top:393.5px;font-size:12px;line-height:16px;color:#222;font-weight:700">Calculate using</div>
<div class="a" style="left:470px;top:414px;width:440px;height:32px;border:1px solid #dcdeda;border-radius:7px;background:#fff"></div>
<div class="a" style="left:478.5px;top:422.5px;font-size:12.7px;line-height:16px;color:#555553">Table down</div>
<svg class="a" style="left:892px;top:428px" width="10" height="6" viewBox="0 0 10 6"><path d="M1 .8h8l-4 4.4z" fill="#555"/></svg>
<div class="a" style="left:469.5px;top:462.5px;font-size:12px;line-height:16px;color:#222;font-weight:700">Apply calculation in the following order</div>
<div class="a" style="left:470px;top:482px;width:440px;height:131px;border:1px solid #dcdeda;border-radius:9px;background:#fff"></div>
<div class="a b" style="left:486.5px;top:499.5px;font-size:12px;line-height:16px;letter-spacing:.5px;color:#222">Addressing</div>
<div class="a" style="left:487px;top:531px;width:406px;height:1px;background:#e6e8e4"></div>
<div class="a b" style="left:486.5px;top:548.5px;font-size:12px;line-height:16px;letter-spacing:.6px;color:#222">Partitioning</div>
<div class="a" style="left:608.5px;top:548.5px;font-size:12px;line-height:16px;color:#222">YEAR(order_created_date)</div>
<div class="a" style="left:608.5px;top:580.5px;font-size:12.2px;line-height:16px;color:#222">web_event_channel</div>
<div class="a" style="left:470px;top:621px;width:440px;height:34px;border:1px solid #dcdeda;border-radius:7px;background:#f3f5f2"></div>
<div class="a" style="left:478.5px;top:630.5px;font-size:12.85px;line-height:16px;color:#222">Reapply the calculation within <b style="font-size:12.05px">partitioning fields.</b></div>
<div class="a" style="left:463px;width:83px;top:692.5px;height:32px;border-radius:16px;font-size:12.45px;line-height:33px;text-align:center;background:#eceef2;color:#111">Cancel</div>
<div class="a" style="left:558px;width:83px;top:692.5px;height:32px;border-radius:16px;font-size:12.45px;line-height:33px;text-align:center;background:#f4f5f7;color:#a0a0a4">Reset</div>
<div class="a" style="left:714.5px;width:83px;top:692.5px;height:32px;border-radius:16px;font-size:12.45px;line-height:33px;text-align:center;background:#f4f5f7;color:#a0a0a4">Apply</div>
<div class="a" style="left:809px;width:109px;top:692.5px;height:32px;border-radius:16px;font-size:12.45px;line-height:33px;text-align:center;background:#2970ee;color:#fff">Apply &amp; close</div>
<div class="a" style="left:470px;top:300px;width:440px;height:88px;background:#fff;border-radius:0 0 3px 3px;box-shadow:0 2px 5px rgba(0,0,0,.32),0 0 2px rgba(0,0,0,.12)"></div>
<div class="a" style="left:470px;top:356px;width:440px;height:24px;background:#f2f4f1"></div>
<div class="a" style="top:312.5px;left:493.5px;font-size:12.65px;line-height:16px;color:#222">Difference</div>
<div class="a" style="top:336.5px;left:493.5px;font-size:12.7px;line-height:16px;color:#222">Percent difference</div>
<div class="a b" style="top:360.5px;left:493.5px;font-size:12.1px;line-height:16px;color:#222">Percent of total</div>
<div class="a" style="left:480px;top:367px;width:4px;height:4px;border-radius:2px;background:#7aa5f5"></div>
<div class="a" style="left:450px;top:237px;width:480px;height:166px;border:4px solid #a58ef8"></div>
<!--/MODAL-->
<!--BTNS-->
<div class="a" style="left:520px;top:743px;width:280px;height:30px;overflow:hidden"><div class="a" style="left:-520px;top:-743px">
<div class="a b" style="left:528px;top:742px;width:119px;height:23px;border:1px solid rgba(150,152,148,.45);border-radius:7px;background:rgba(248,249,247,.5);font-size:11.8px;line-height:22px;padding-left:25.5px;color:#222">Export to .CSV</div>
<svg class="a" style="left:535px;top:746px" width="15" height="14" viewBox="535 746 15 14" fill="none" stroke="#636361" stroke-width=".95"><path d="M542.2 748.200V754.600M539.800 752.600L542.2 755L544.600 752.600M536.600 757.300H547.800"/></svg>
<div class="a b" style="left:655px;top:742px;width:80px;height:23px;border:1px solid rgba(150,152,148,.45);border-radius:7px;background:rgba(248,249,247,.5);font-size:12px;line-height:22px;text-align:center;color:#222">Copy</div>
</div></div>
<!--/BTNS-->
<!--CURSOR-->
<div class="a" style="left:797px;top:346.8px;width:52px;height:52px;border-radius:26px;background:rgba(158,138,248,.5)"></div>
<svg class="a" style="left:812px;top:360px" width="24" height="25" viewBox="812 360 24 25"><path d="M818.300 364.200C817.900 362.700 818.900 362 820 362C821 362 821.700 362.600 822 363.800L823.300 368.700C823.700 367.600 826.400 367.300 827 369.100C827.600 367.900 830 368 830.400 369.700C831.300 368.800 833.400 369.400 833.800 371.200C834.300 373.500 834 376.400 833.200 378.400C832.700 379.700 831.700 380.800 831.500 382.700L821.600 382.500C821.300 381.400 820.600 380.600 819.600 379.400L815.300 374.200C814.300 372.900 815 371.500 816.400 371.500C817.700 371.500 819 372.700 820.500 374.300Z" fill="#fff" stroke="#111" stroke-width="1.15" stroke-linejoin="round"/><path d="M823.700 374.300v4M826.400 374.300v4M829.200 374.300v4" stroke="#222" stroke-width=".9" fill="none"/></svg>
<!--/CURSOR-->
<div class="a" style="left:48.6px;top:856px;font-size:41px;line-height:48px;letter-spacing:-2.3px;color:#000;-webkit-text-stroke:1.1px #000">1.5</div>
</body>
</html>
